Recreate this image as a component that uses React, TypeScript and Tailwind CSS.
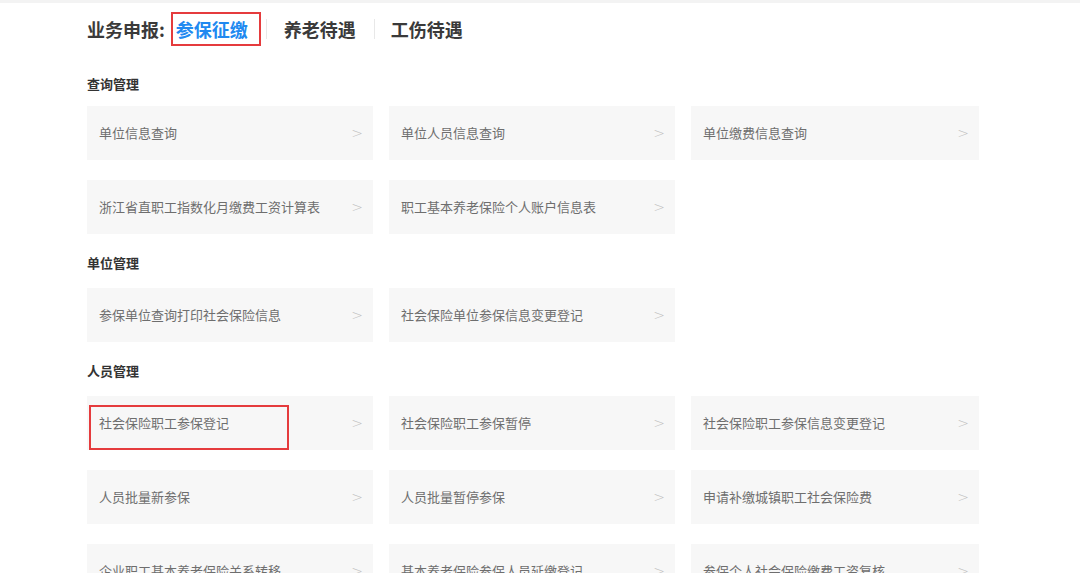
const FONT = { fontFamily: '"Microsoft YaHei", "Noto Sans CJK SC", "Noto Sans", sans-serif' };

type Item = { label: string; marked?: boolean };

interface SectionProps {
  title: string;
  rows: Item[][];
  first?: boolean;
}

function Card({ label, marked }: Item) {
  return (
    <div className="relative flex h-[54px] items-center justify-between bg-[#f7f7f7] pl-3 pr-[10px]">
      <span className="truncate text-[13px] text-[#6e6e6e]">{label}</span>
      <span className="text-[14px] font-light text-[#c0c0c0]" style={{ fontFamily: '"DejaVu Sans", sans-serif' }}>
        &gt;
      </span>
      {marked && (
        <div className="pointer-events-none absolute left-[2px] top-[9px] h-[45px] w-[200px] border-2 border-[#e53b3d]" />
      )}
    </div>
  );
}

function Section({ title, rows, first }: SectionProps) {
  return (
    <section className={first ? "mt-[29px]" : "mt-5"}>
      <h3 className={`text-[13px] font-bold leading-[18px] text-[#333] ${first ? "mb-[13px]" : "mb-4"}`}>{title}</h3>
      <div className="flex flex-col gap-5">
        {rows.map((row, i) => (
          <div key={i} className="grid grid-cols-[286px_286px_288px] gap-x-4">
            {row.map((item) => (
              <Card key={item.label} {...item} />
            ))}
          </div>
        ))}
      </div>
    </section>
  );
}

const sections: SectionProps[] = [
  {
    title: "查询管理",
    first: true,
    rows: [
      [{ label: "单位信息查询" }, { label: "单位人员信息查询" }, { label: "单位缴费信息查询" }],
      [{ label: "浙江省直职工指数化月缴费工资计算表" }, { label: "职工基本养老保险个人账户信息表" }],
    ],
  },
  {
    title: "单位管理",
    rows: [[{ label: "参保单位查询打印社会保险信息" }, { label: "社会保险单位参保信息变更登记" }]],
  },
  {
    title: "人员管理",
    rows: [
      [
        { label: "社会保险职工参保登记", marked: true },
        { label: "社会保险职工参保暂停" },
        { label: "社会保险职工参保信息变更登记" },
      ],
      [{ label: "人员批量新参保" }, { label: "人员批量暂停参保" }, { label: "申请补缴城镇职工社会保险费" }],
      [
        { label: "企业职工基本养老保险关系转移" },
        { label: "基本养老保险参保人员延缴登记" },
        { label: "参保个人社会保险缴费工资复核" },
      ],
    ],
  },
];

export default function App() {
  return (
    <div className="h-[573px] w-full overflow-hidden border-t-[3px] border-[#f3f3f3] bg-white" style={FONT}>
      <div className="pl-[87px]">
        <div className="mt-[9px] flex h-[34px] items-center text-[18px] font-bold">
          <span className="text-[#3a3a3a]">业务申报:</span>
          <div className="ml-[6px] flex h-[34px] w-[90px] items-center border-2 border-[#e53b3d] pl-[3px] text-[#2189f0]">
            参保征缴
          </div>
          <span className="ml-[5px] h-[20px] w-px bg-[#e8e8e8]" />
          <span className="ml-[17px] text-[#3a3a3a]">养老待遇</span>
          <span className="ml-[18px] h-[20px] w-px bg-[#e8e8e8]" />
          <span className="ml-[16px] text-[#3a3a3a]">工伤待遇</span>
        </div>
        {sections.map((s) => (
          <Section key={s.title} {...s} />
        ))}
      </div>
    </div>
  );
}
